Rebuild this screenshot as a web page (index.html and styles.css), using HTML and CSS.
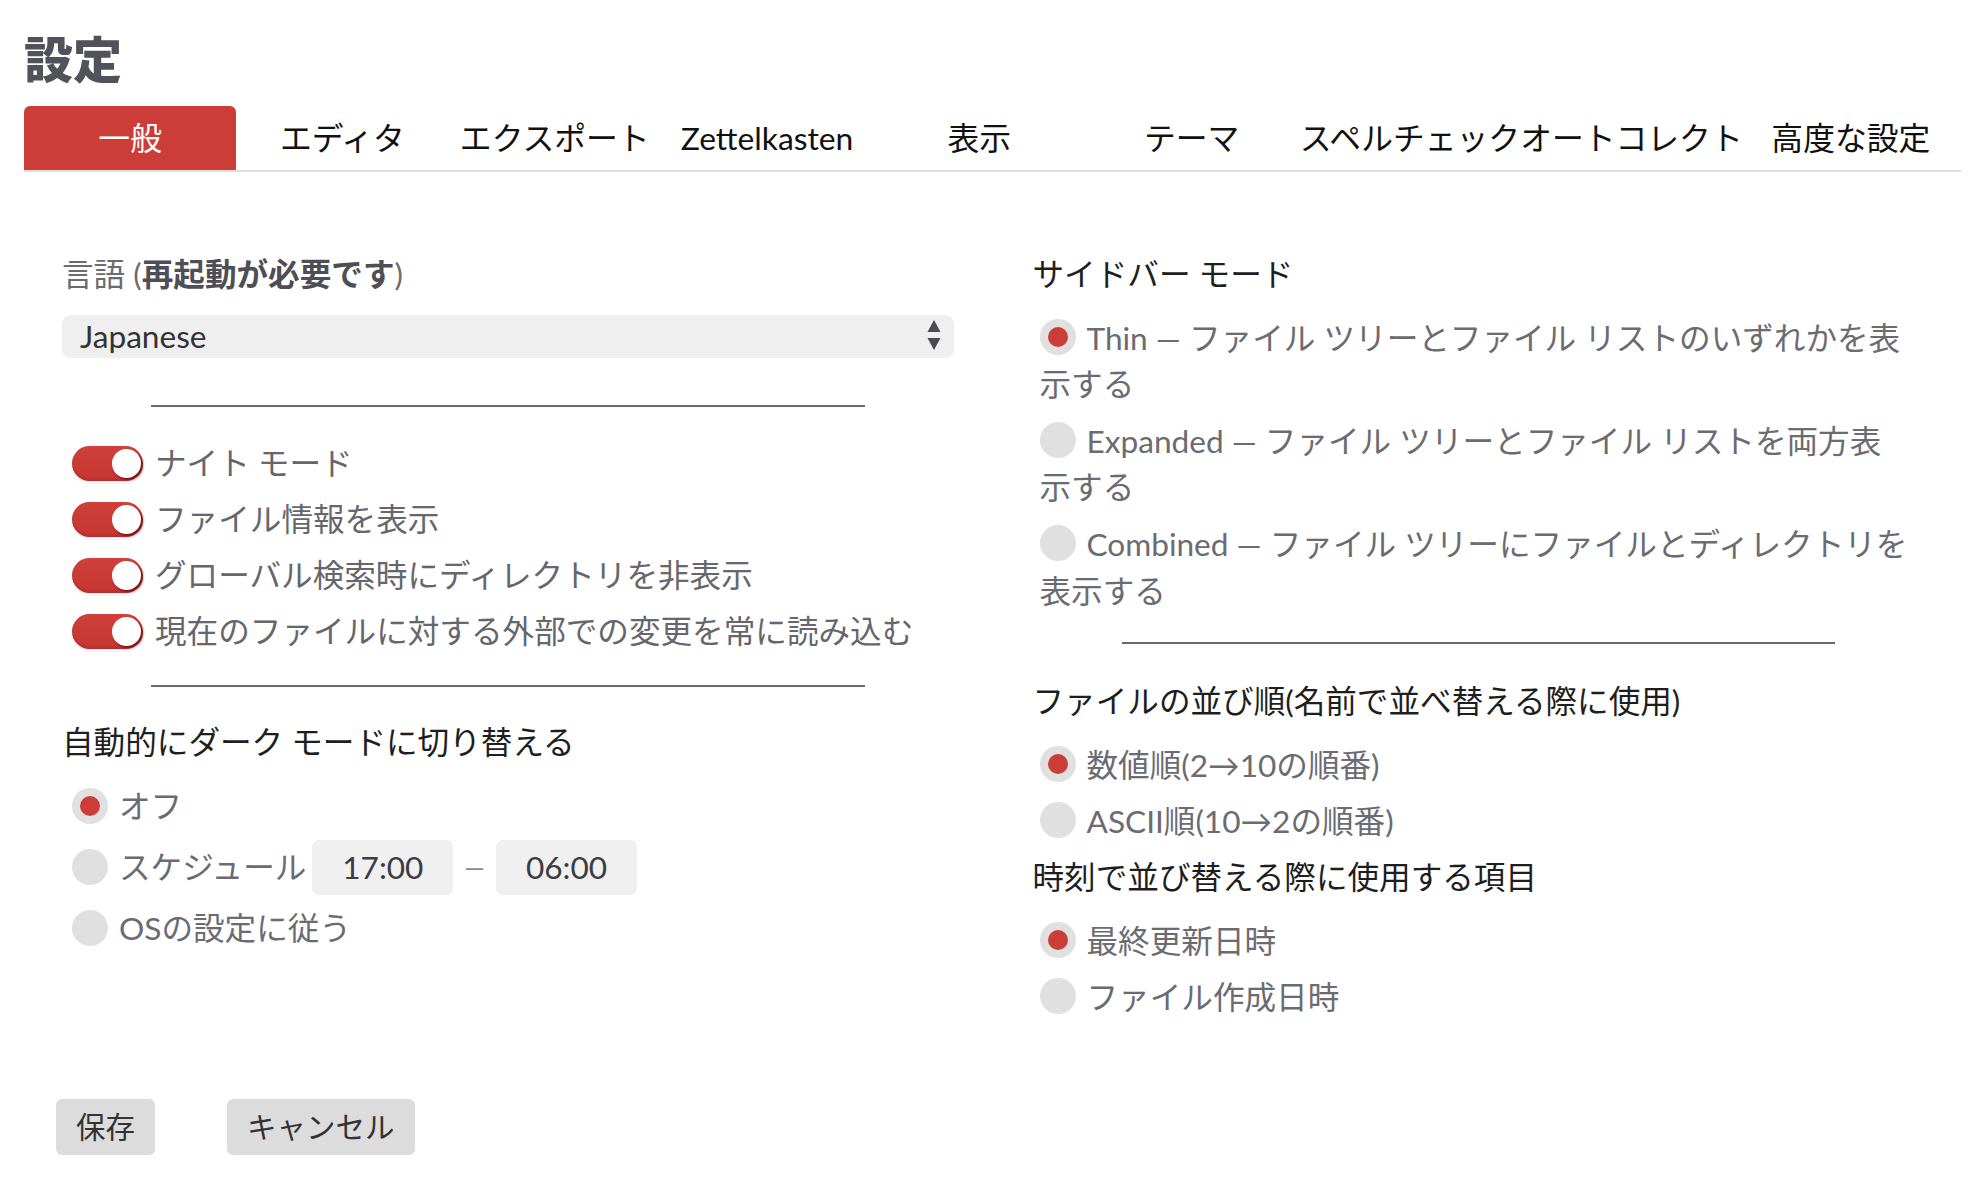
FILE: index.html
```html
<!DOCTYPE html>
<html lang="ja">
<head>
<meta charset="utf-8">
<title>設定</title>
<link rel="stylesheet" href="styles.css">
</head>
<body>
<div class="page">
  <h1 class="title">設定</h1>
  <nav class="tabs">
    <div class="tab active">一般</div>
    <div class="tab">エディタ</div>
    <div class="tab">エクスポート</div>
    <div class="tab">Zettelkasten</div>
    <div class="tab">表示</div>
    <div class="tab">テーマ</div>
    <div class="tab tab-long">スペルチェックオートコレクト</div>
    <div class="tab">高度な設定</div>
  </nav>

  <main class="content">
    <section class="col">
      <div class="label">言語 (<b>再起動が必要です</b>)</div>
      <div class="select">
        <span class="select-value">Japanese</span>
        <svg class="select-arrows" width="14" height="32" viewBox="0 0 14 32">
          <polygon points="7,0 13.5,12 0.5,12" fill="#4a4a50"/>
          <polygon points="0.5,18 13.5,18 7,30" fill="#4a4a50"/>
        </svg>
      </div>
      <hr class="rule">
      <ul class="toggles">
        <li class="toggle-row"><span class="switch"><span class="knob"></span></span><span>ナイト モード</span></li>
        <li class="toggle-row"><span class="switch"><span class="knob"></span></span><span>ファイル情報を表示</span></li>
        <li class="toggle-row"><span class="switch"><span class="knob"></span></span><span>グローバル検索時にディレクトリを非表示</span></li>
        <li class="toggle-row"><span class="switch"><span class="knob"></span></span><span>現在のファイルに対する外部での変更を常に読み込む</span></li>
      </ul>
      <hr class="rule rule-after-toggles">
      <div class="heading heading-dark">自動的にダーク モードに切り替える</div>
      <div class="radios">
        <div class="radio-row"><span class="ring on"><span class="dot"></span></span><span>オフ</span></div>
        <div class="radio-row"><span class="ring"></span><span>スケジュール</span>
          <span class="time">17:00</span><span class="time-dash">—</span><span class="time">06:00</span>
        </div>
        <div class="radio-row"><span class="ring"></span><span>OSの設定に従う</span></div>
      </div>
    </section>

    <section class="col">
      <div class="heading">サイドバー モード</div>
      <div class="radios">
        <div class="radio-item"><span class="ring on"><span class="dot"></span></span>Thin — ファイル ツリーとファイル リストのいずれかを表<br>示する</div>
        <div class="radio-item"><span class="ring"></span>Expanded — ファイル ツリーとファイル リストを両方表<br>示する</div>
        <div class="radio-item"><span class="ring"></span>Combined — ファイル ツリーにファイルとディレクトリを<br>表示する</div>
      </div>
      <hr class="rule rule-right">
      <div class="heading heading-sort">ファイルの並び順(名前で並べ替える際に使用)</div>
      <div class="radios">
        <div class="radio-item"><span class="ring on"><span class="dot"></span></span>数値順(2→10の順番)</div>
        <div class="radio-item"><span class="ring"></span>ASCII順(10→2の順番)</div>
      </div>
      <div class="heading heading-next">時刻で並び替える際に使用する項目</div>
      <div class="radios">
        <div class="radio-item"><span class="ring on"><span class="dot"></span></span>最終更新日時</div>
        <div class="radio-item"><span class="ring"></span>ファイル作成日時</div>
      </div>
    </section>
  </main>

  <div class="buttons">
    <button class="btn">保存</button>
    <button class="btn">キャンセル</button>
  </div>
</div>
</body>
</html>
```

FILE: styles.css
```css
html, body {
  margin: 0;
  background: #ffffff;
}

body {
  font-family: Lato, "Noto Sans CJK JP", sans-serif;
  font-size: 31.6px;
  color: #1e1e1e;
}

.page {
  padding: 0 13px 0 24px;
}

.title {
  margin: 0;
  box-sizing: border-box;
  height: 106px;
  padding-top: 29px;
  font-size: 49px;
  line-height: 60px;
  font-weight: 900;
  color: #51525a;
}

.tabs {
  display: flex;
  border-bottom: 2px solid #dddddd;
}

.tab {
  flex-shrink: 0;
  box-sizing: border-box;
  min-width: 212.3px;
  padding: 0 5px;
  height: 64px;
  line-height: 64px;
  text-align: center;
  font-size: 31.8px;
  color: #111111;
  white-space: nowrap;
}

.tab-long {
  padding: 0 2px;
}

.tab.active {
  background: #cc3d38;
  color: #ffffff;
  border-radius: 6px 6px 0 0;
}

.content {
  display: grid;
  grid-template-columns: 892px 892px;
  column-gap: 78.5px;
  padding: 79px 0 0 38px;
  line-height: 46.6px;
}

.label {
  color: #6b6b70;
}

.label b {
  font-weight: 700;
  color: #4e4e56;
}

.select {
  margin-top: 17px;
  height: 43px;
  box-sizing: border-box;
  background: #efefef;
  border-radius: 9px;
  display: flex;
  align-items: center;
  justify-content: space-between;
  padding: 0 13px 0 18px;
}

.select-value {
  color: #333333;
}

.select-arrows {
  display: block;
}

.rule {
  width: 80%;
  margin: 47px auto 0;
  border: 0;
  border-top: 2px solid #6a6a6e;
  height: 0;
}

.rule-after-toggles {
  margin-top: 25px;
}

.rule-right {
  margin-top: 28px;
}

.toggles {
  list-style: none;
  margin: 29px 0 0;
  padding: 0;
}

.toggle-row {
  display: flex;
  align-items: center;
  height: 56px;
  padding-left: 10px;
  color: #66666c;
  white-space: nowrap;
}

.switch {
  flex-shrink: 0;
  box-sizing: border-box;
  width: 71px;
  height: 35px;
  border-radius: 18px;
  background: linear-gradient(180deg, #cf403b 0%, #c53632 100%);
  box-shadow: inset 0 -2px 3px rgba(0, 0, 0, 0.12), 0 2px 3px rgba(0, 0, 0, 0.08);
  display: flex;
  align-items: center;
  justify-content: flex-end;
  padding-right: 2px;
  margin-right: 12px;
}

.knob {
  width: 29px;
  height: 29px;
  border-radius: 50%;
  background: #ffffff;
  box-shadow: 2px 2px 2px rgba(110, 10, 10, 0.8);
}

.heading {
  color: #1e1e1e;
}

.heading-dark {
  margin-top: 32px;
}

.heading-sort {
  margin-top: 34px;
}

.heading-next {
  margin-top: 9px;
}

.radios {
  display: flex;
  flex-direction: column;
  gap: 10px;
  margin-top: 17px;
}

.col:first-child .radios {
  margin-top: 18px;
}

.radio-row {
  display: flex;
  align-items: center;
  min-height: 46px;
  padding-left: 10px;
  color: #6b6b72;
  white-space: nowrap;
}

.radio-item {
  padding: 0 0 0 7px;
  color: #6b6b72;
}

.ring {
  display: inline-block;
  box-sizing: border-box;
  width: 36px;
  height: 36px;
  border-radius: 50%;
  background: #e0e0e0;
  flex-shrink: 0;
  margin-right: 11px;
  vertical-align: -5px;
}

.dot {
  display: block;
  width: 20px;
  height: 20px;
  margin: 8px auto 0;
  border-radius: 50%;
  background: #cc3d38;
}

.time {
  box-sizing: border-box;
  width: 141px;
  height: 55px;
  margin-left: 6px;
  background: #f0f0f0;
  border-radius: 7px;
  display: flex;
  align-items: center;
  justify-content: center;
  color: #3c3c42;
}

.time-dash {
  margin: 0 11px;
  font-size: 26px;
  color: #8a8a8a;
}

.time-dash + .time {
  margin-left: 0;
}

.buttons {
  display: flex;
  gap: 72px;
  padding-left: 32px;
  margin-top: 78px;
}

.btn {
  height: 56px;
  padding: 0 20px;
  border: 0;
  border-radius: 6px;
  background: #dcdcdc;
  color: #333333;
  font-family: Lato, "Noto Sans CJK JP", sans-serif;
  font-size: 29.5px;
  line-height: 56px;
}
```
